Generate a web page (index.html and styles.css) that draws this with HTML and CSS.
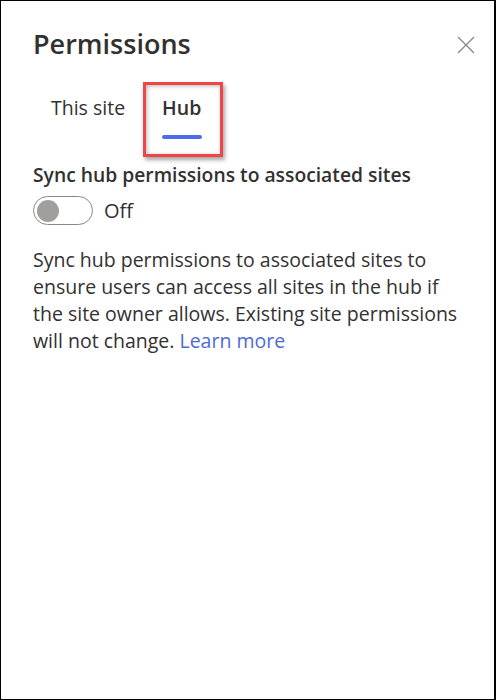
FILE: index.html
```html
<!DOCTYPE html>
<html>
<head>
<meta charset="utf-8">
<link rel="stylesheet" href="styles.css">
</head>
<body>
<div class="panel">
  <header class="head">
    <h1 class="title">Permissions</h1>
    <button class="close" aria-label="Close">
      <svg width="18" height="18" viewBox="0 0 18 18"><path d="M1 1 L17 17 M17 1 L1 17" stroke="#8a8a8a" stroke-width="1.4" fill="none"/></svg>
    </button>
  </header>
  <nav class="tabs">
    <div class="tab">This site</div>
    <div class="tab active">Hub<span class="bar"></span><span class="callout"></span></div>
  </nav>
  <section class="section">
    <h2 class="label">Sync hub permissions to associated sites</h2>
    <div class="toggle-row">
      <span class="toggle"><span class="knob"></span></span>
      <span class="state">Off</span>
    </div>
    <p class="desc">Sync hub permissions to associated sites to ensure users can access all sites in the hub if the site owner allows. Existing site permissions will not change. <a class="link" href="#">Learn more</a></p>
  </section>
</div>
</body>
</html>
```
FILE: styles.css
```css
html, body { margin: 0; padding: 0; background: #fff; }
body { font-family: "Open Sans", "Noto Sans", sans-serif; color: #323130; }
.panel {
  box-sizing: border-box;
  width: 496px;
  height: 700px;
  border: 1px solid #000;
  border-right-width: 2px;
  padding: 0 0 0 32px;
}
.head { display: flex; align-items: flex-start; justify-content: space-between; padding-top: 23.5px; padding-right: 19px; }
.title { margin: 0; font-size: 27px; font-weight: 600; line-height: 38px; color: #323130; }
.close { border: 0; background: none; padding: 0; margin-top: 11px; width: 18px; height: 18px; display: block; }
.close svg { display: block; }
.tabs { display: flex; margin-top: 33px; padding-left: 18px; gap: 37px; height: 44px; }
.tab { position: relative; font-size: 19.5px; line-height: 24px; height: 24px; color: #323130; }
.tab.active { font-weight: 600; }
.bar { position: absolute; left: 0; right: -1px; top: 39.5px; height: 4px; border-radius: 2px; background: #4f6bed; }
.callout {
  position: absolute;
  left: -19px; top: -13.5px; width: 80px; height: 75px;
  box-sizing: border-box;
  border: 3px solid #f04545;
  box-shadow: 2px 3px 4px rgba(0,0,0,0.35), inset 1px 1px 4px rgba(0,0,0,0.3);
}
.section { padding-top: 23px; padding-right: 28px; }
.label { margin: 0; font-size: 19.3px; font-weight: 600; line-height: 24px; color: #323130; }
.toggle-row { display: flex; align-items: center; margin-top: 9.5px; gap: 11px; }
.toggle { box-sizing: border-box; width: 60px; height: 29px; border: 1px solid #8a8886; border-radius: 15px; display: flex; align-items: center; padding-left: 3px; }
.knob { width: 22px; height: 22px; border-radius: 50%; background: #a19f9d; }
.state { font-size: 20px; line-height: 27px; }
.desc { margin: 20.5px 0 0; font-size: 19.5px; line-height: 27.2px; color: #323130; }
.link { color: #4f6bd8; text-decoration: none; }
```
